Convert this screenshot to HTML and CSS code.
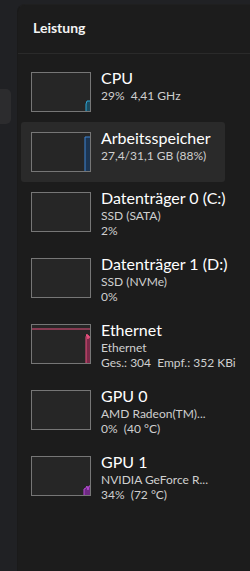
FILE: index.html
```html
<!DOCTYPE html>
<html lang="de">
<head>
    <meta charset="UTF-8">
    <meta name="viewport" content="width=device-width, initial-scale=1.0">
    <title>Leistung</title>
    <link rel="stylesheet" href="styles.css">
</head>
<body>
    <div class="nav">
        <div class="nav-item"></div>
    </div>
    <div class="panel">
        <div class="header">Leistung</div>
        <div class="list">
            <div class="item">
                <div class="thumb">
                    <svg viewBox="0 0 58 38" width="58" height="38">
                        <polygon points="54,38 54,31 55,28 58,28 58,38" fill="#1b4a5e"/>
                        <polyline points="54,38 54,31 55,28 58,28" fill="none" stroke="#2fa6d6" stroke-width="1"/>
                    </svg>
                </div>
                <div class="info">
                    <div class="title">CPU</div>
                    <div class="sub">29%&nbsp; 4,41 GHz</div>
                </div>
            </div>
            <div class="item selected">
                <div class="thumb">
                    <svg viewBox="0 0 58 38" width="58" height="38">
                        <polygon points="53,38 53,4 58,4 58,38" fill="#1c3552"/>
                        <polyline points="53,38 53,4 58,4" fill="none" stroke="#3f86d4" stroke-width="1"/>
                    </svg>
                </div>
                <div class="info">
                    <div class="title">Arbeitsspeicher</div>
                    <div class="sub">27,4/31,1 GB (88%)</div>
                </div>
            </div>
            <div class="item">
                <div class="thumb"></div>
                <div class="info">
                    <div class="title">Datenträger 0 (C:)</div>
                    <div class="sub">SSD (SATA)</div>
                    <div class="sub">2%</div>
                </div>
            </div>
            <div class="item">
                <div class="thumb"></div>
                <div class="info">
                    <div class="title">Datenträger 1 (D:)</div>
                    <div class="sub">SSD (NVMe)</div>
                    <div class="sub">0%</div>
                </div>
            </div>
            <div class="item">
                <div class="thumb">
                    <svg viewBox="0 0 58 38" width="58" height="38">
                        <polyline points="0,4 58,4" fill="none" stroke="#e8507e" stroke-width="1"/>
                        <polygon points="54,38 54,12 55,9 56,14 56,10 57,13 58,11 58,38" fill="#7a2a48"/>
                        <polyline points="54,38 54,12 55,9 56,14 56,10 57,13 58,11" fill="none" stroke="#e8507e" stroke-width="1"/>
                    </svg>
                </div>
                <div class="info">
                    <div class="title">Ethernet</div>
                    <div class="sub">Ethernet</div>
                    <div class="sub">Ges.: 304&nbsp; Empf.: 352 KBi</div>
                </div>
            </div>
            <div class="item">
                <div class="thumb"></div>
                <div class="info">
                    <div class="title">GPU 0</div>
                    <div class="sub">AMD Radeon(TM)...</div>
                    <div class="sub">0%&nbsp; (40 °C)</div>
                </div>
            </div>
            <div class="item">
                <div class="thumb">
                    <svg viewBox="0 0 58 38" width="58" height="38">
                        <polygon points="52,38 52,32 54,31 55,29 56,33 57,29 58,29 58,38" fill="#6e2a82"/>
                        <polyline points="52,38 52,32 54,31 55,29 56,33 57,29 58,29" fill="none" stroke="#b84ad8" stroke-width="1"/>
                    </svg>
                </div>
                <div class="info">
                    <div class="title">GPU 1</div>
                    <div class="sub">NVIDIA GeForce R...</div>
                    <div class="sub">34%&nbsp; (72 °C)</div>
                </div>
            </div>
        </div>
    </div>
</body>
</html>
```

FILE: styles.css
```css
* {
    margin: 0;
    padding: 0;
    box-sizing: border-box;
}
body {
    font-family: 'Lato', 'Open Sans', sans-serif;
    background-color: #202124;
    color: #ffffff;
    display: flex;
    height: 100vh;
    overflow: hidden;
}
.nav {
    width: 17px;
    flex-shrink: 0;
}
.nav-item {
    margin-top: 89px;
    width: 11px;
    height: 35px;
    background-color: #2c2c2e;
    border-radius: 0 5px 5px 0;
}
.panel {
    flex: 1;
    margin-top: 4px;
    background-color: #1c1c1c;
    border-top-left-radius: 8px;
    border-left: 1px solid #1a1a1a;
    border-top: 1px solid #1f1f1f;
    overflow: hidden;
}
.header {
    height: 49px;
    padding: 13px 15px 0;
    font-size: 14px;
    font-weight: 700;
    line-height: 20px;
    color: #f3f3f3;
    border-bottom: 1px solid #2a2a2a;
}
.list {
    padding-top: 8px;
}
.item {
    display: flex;
    align-items: flex-start;
    gap: 10px;
    width: 204px;
    margin-left: 3px;
    padding: 10px 0 10px 10px;
    border-radius: 3px;
}
.item.selected {
    background-color: #2a2a2a;
}
.thumb {
    width: 60px;
    height: 40px;
    flex-shrink: 0;
    background-color: #262626;
    border: 1px solid #767676;
}
.thumb svg {
    display: block;
}
.info {
    flex-shrink: 0;
    margin-top: -4px;
    white-space: nowrap;
}
.title {
    font-size: 16px;
    line-height: 20px;
    color: #ffffff;
}
.sub {
    font-size: 12px;
    line-height: 15px;
    color: #cfcfcf;
}
```
